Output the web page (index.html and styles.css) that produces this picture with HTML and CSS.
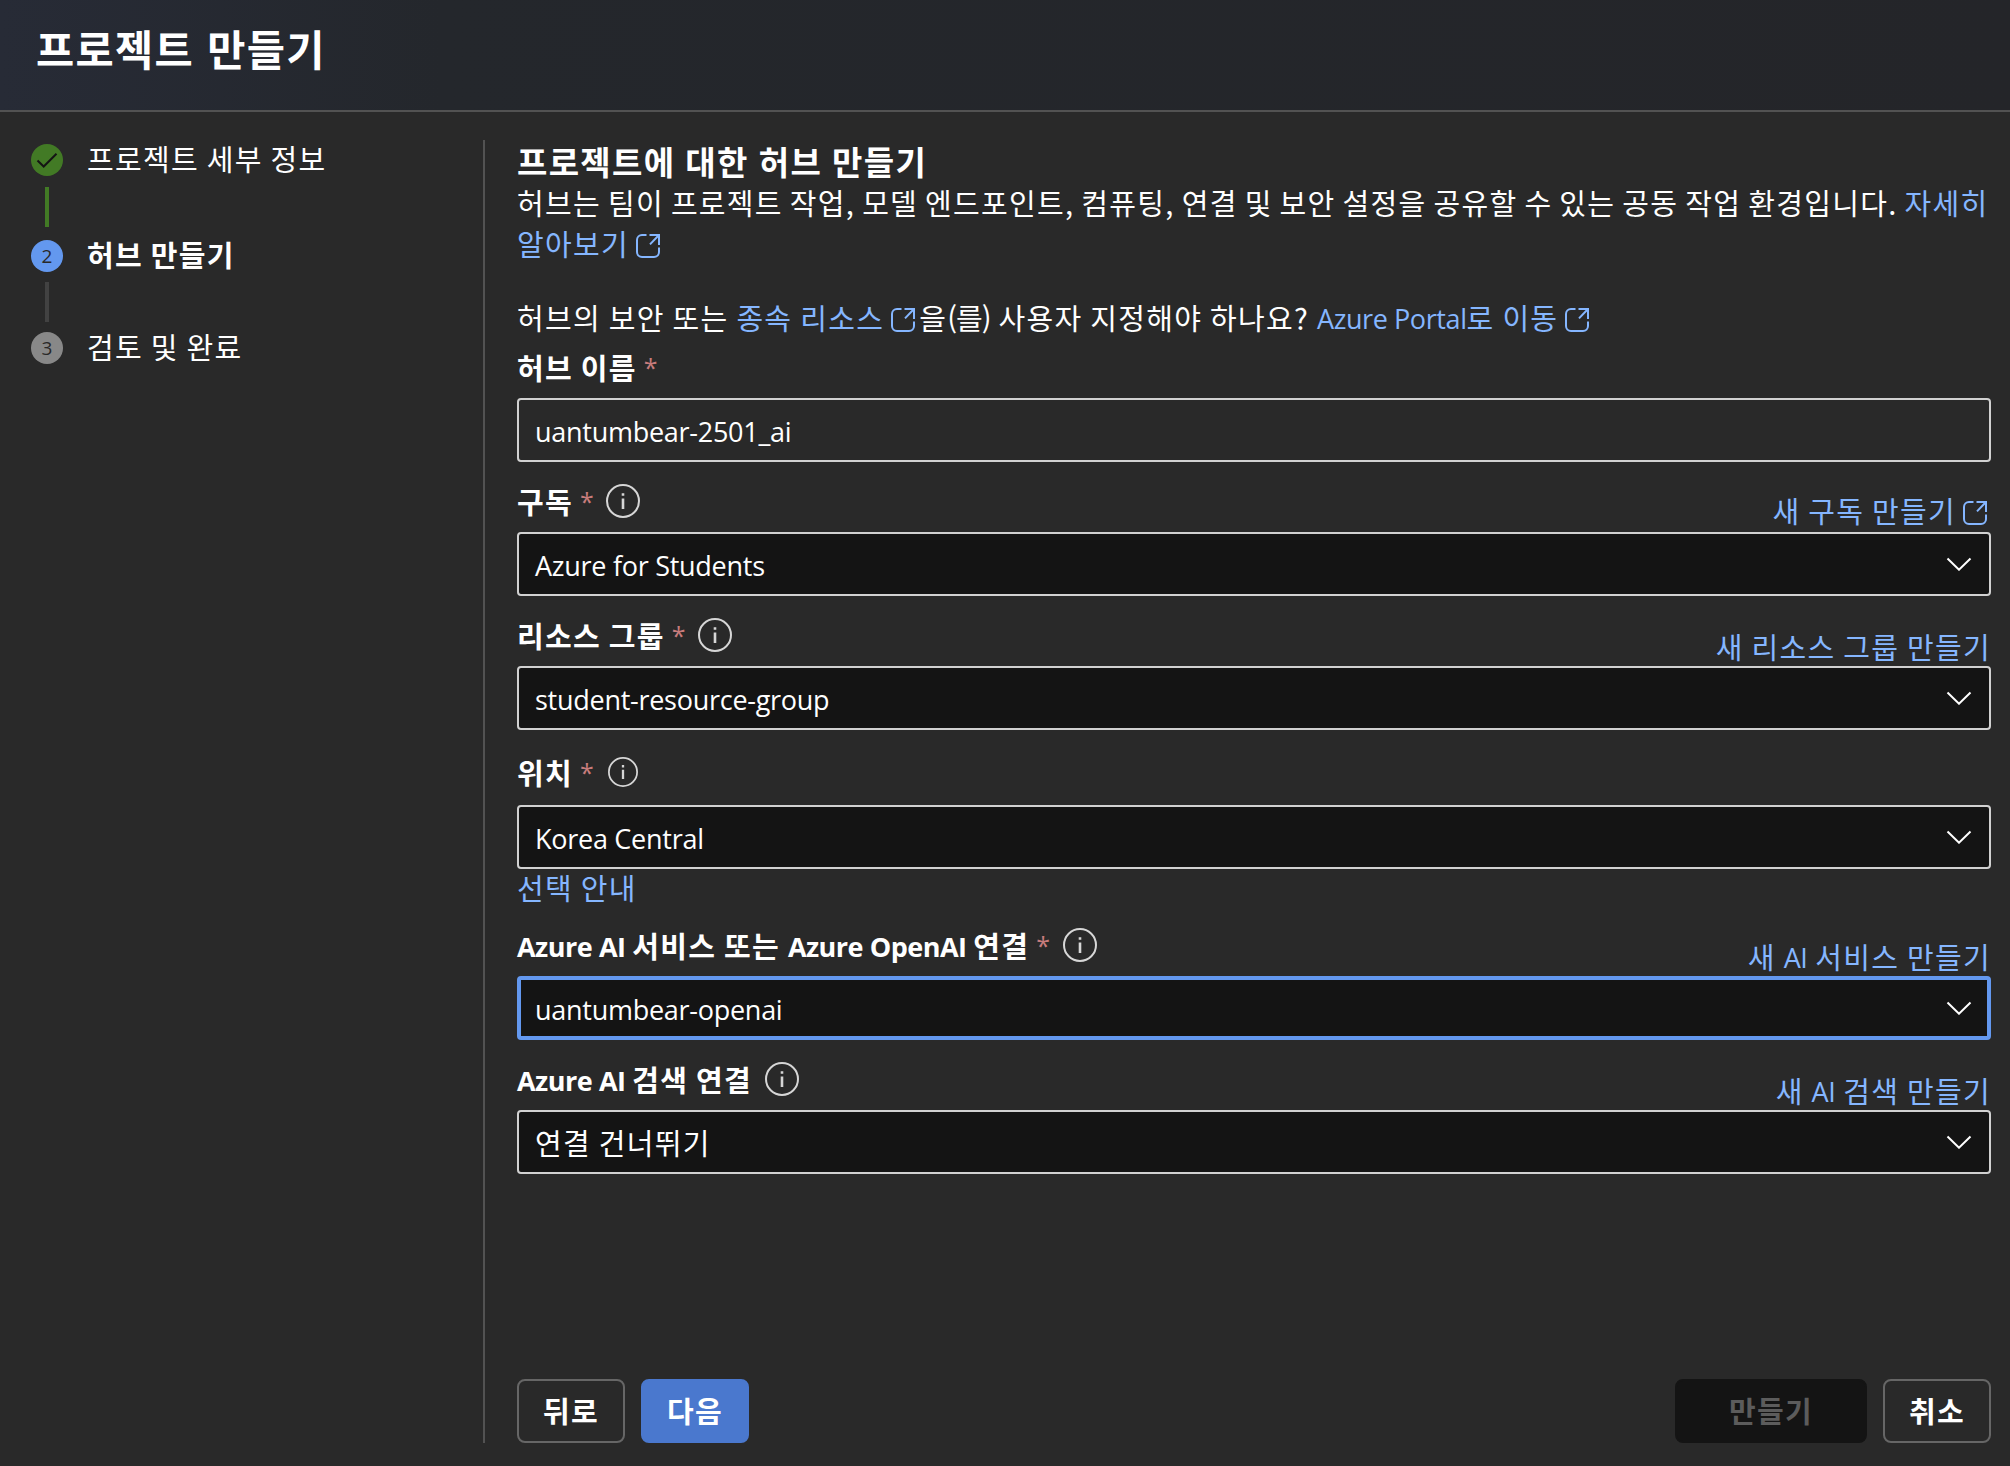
FILE: index.html
```html
<!DOCTYPE html>
<html lang="ko">
<head>
<meta charset="utf-8">
<title>프로젝트 만들기</title>
<link rel="stylesheet" href="styles.css">
</head>
<body>
<svg class="sprite" aria-hidden="true">
  <symbol id="open" viewBox="0 0 24 24"><path d="M10.5 1H6a5 5 0 0 0-5 5v12a5 5 0 0 0 5 5h12a5 5 0 0 0 5-5v-4.5M13.5 1H23v10M23 1l-9 9.4"/></symbol>
  <symbol id="info" viewBox="0 0 34 34"><circle cx="17" cy="17" r="16"/><path stroke-width="2.6" d="M17 14.5v10.500M17 9.200v2.600"/></symbol>
  <symbol id="chevron" viewBox="0 0 26 14"><path d="M1.5 1.5 13 12.7 24.500 1.500"/></symbol>
</svg>
<header class="header"><h1 class="title">프로젝트 만들기</h1></header>
<div class="body">
  <nav class="steps">
    <div class="step"><span class="dot dot-done"><svg viewBox="0 0 32 32"><path d="M6.500 16.500 12.700 22.500 25.500 9.700"/></svg></span><span class="step-text">프로젝트 세부 정보</span></div>
    <div class="bar bar-done"></div>
    <div class="step"><span class="dot dot-active">2</span><span class="step-text step-current">허브 만들기</span></div>
    <div class="bar bar-next"></div>
    <div class="step"><span class="dot dot-next">3</span><span class="step-text">검토 및 완료</span></div>
  </nav>
  <main class="main">
    <h2 class="heading">프로젝트에 대한 허브 만들기</h2>
    <p class="text text-intro">허브는 팀이 프로젝트 작업, 모델 엔드포인트, 컴퓨팅, 연결 및 보안 설정을 공유할 수 있는 공동 작업 환경입니다. <a class="link">자세히<br>알아보기<svg class="open"><use href="#open"/></svg></a></p>
    <p class="text text-gap">허브의 보안 또는 <a class="link">종속 리소스<svg class="open"><use href="#open"/></svg></a>을<span class="tight">(를)</span> 사용자 지정해야 하나요? <a class="link"><span class="latin">Azure Portal</span>로 이동<svg class="open"><use href="#open"/></svg></a></p>

    <div class="head head-first"><label class="label">허브 이름<span class="star">*</span></label></div>
    <div class="box input"><span class="latin">uantumbear-2501_ai</span></div>

    <div class="head"><label class="label">구독<span class="star">*</span><svg class="info"><use href="#info"/></svg></label><a class="link new new-open">새 구독 만들기<svg class="open"><use href="#open"/></svg></a></div>
    <div class="box"><span class="latin">Azure for Students</span><svg class="chevron"><use href="#chevron"/></svg></div>

    <div class="head"><label class="label">리소스 그룹<span class="star">*</span><svg class="info"><use href="#info"/></svg></label><a class="link new">새 리소스 그룹 만들기</a></div>
    <div class="box"><span class="latin">student-resource-group</span><svg class="chevron"><use href="#chevron"/></svg></div>

    <div class="head head-location"><label class="label">위치<span class="star">*</span><svg class="info info-small"><use href="#info"/></svg></label></div>
    <div class="box"><span class="latin">Korea Central</span><svg class="chevron"><use href="#chevron"/></svg></div>
    <a class="link help">선택 안내</a>

    <div class="head"><label class="label"><span class="mixed"><span class="latin">Azure AI </span>서비스 또는 <span class="latin">Azure OpenAI </span>연결</span><span class="star">*</span><svg class="info"><use href="#info"/></svg></label><a class="link new">새 <span class="latin">AI</span> 서비스 만들기</a></div>
    <div class="box box-focus"><span class="latin">uantumbear-openai</span><svg class="chevron"><use href="#chevron"/></svg></div>

    <div class="head"><label class="label"><span class="mixed"><span class="latin">Azure AI </span>검색 연결</span><svg class="info"><use href="#info"/></svg></label><a class="link new">새 <span class="latin">AI</span> 검색 만들기</a></div>
    <div class="box"><span>연결 건너뛰기</span><svg class="chevron"><use href="#chevron"/></svg></div>

    <footer class="footer">
      <button class="btn">뒤로</button>
      <button class="btn btn-primary">다음</button>
      <button class="btn btn-disabled" disabled>만들기</button>
      <button class="btn">취소</button>
    </footer>
  </main>
</div>
</body>
</html>
```
FILE: styles.css
```css
* { box-sizing: border-box; }
body {
  margin: 0;
  height: 1466px;
  display: flex;
  flex-direction: column;
  background: #292929;
  color: #fff;
  font-family: "Noto Sans CJK KR", sans-serif;
  font-size: 29px;
  letter-spacing: 0.045em;
  word-spacing: -1.6px;
  overflow: hidden;
}
.sprite { display: none; }
svg { fill: none; stroke: currentColor; stroke-width: 2; flex: none; }

.header {
  height: 112px;
  flex: none;
  padding-left: 36px;
  border-bottom: 2px solid #525252;
  background: linear-gradient(90deg, #272b36 0%, #24272c 22%, #242529 100%);
}
.title { margin: 0; font-size: 41.5px; line-height: 96px; font-weight: 700; word-spacing: 0.5px; }

.body { flex: 1; display: flex; padding: 28px 19px 23px 31px; }

.steps { width: 454px; flex: none; border-right: 2px solid #525252; padding-top: 4px; }
.step { display: flex; align-items: center; height: 32px; }
.step-text { margin: -4px 0 0 24px; line-height: 32px; }
.step-current { font-weight: 700; }
.dot {
  width: 32px; height: 32px; border-radius: 50%;
  display: flex; align-items: center; justify-content: center;
  color: #292929; font: 19px "Open Sans", sans-serif; letter-spacing: 0;
}
.dot-done { background: #427a25; color: #141414; }
.dot-active { background: #6398ef; }
.dot-next { background: #888; }
.bar { width: 4px; height: 40px; margin-left: 14px; }
.bar-done { background: #427a25; margin-top: 11px; margin-bottom: 13px; }
.bar-next { background: #424242; margin-top: 10px; margin-bottom: 10px; }

.main { flex: 1; min-width: 0; padding-left: 32px; display: flex; flex-direction: column; }
.heading { margin: 0; font-size: 33px; line-height: 42px; word-spacing: -0.5px; }
.text { margin: 0; height: 41px; line-height: 41px; white-space: nowrap; word-spacing: -1.6px; }
.text-intro { height: 82px; word-spacing: -2.45px; }
.text-gap { margin-top: 33px; }
.link { color: #85b6ff; }
.tight { letter-spacing: -0.9px; }
.latin { font-family: "Open Sans", sans-serif; font-size: 27px; line-height: 1; letter-spacing: -0.01em; word-spacing: 0; white-space: pre; }
.link .latin { position: relative; top: -1px; letter-spacing: -0.015em; }
.open { width: 24px; height: 24px; margin-left: 7px; margin-right: 4px; vertical-align: -1.5px; }

.head { height: 70px; display: flex; justify-content: space-between; align-items: flex-end; }
.head-first { height: 60px; }
.head-location { height: 75px; }
.head-location .label { margin-bottom: 2px; }
.label { display: flex; align-items: center; height: 62px; line-height: 61px; font-weight: 700; white-space: pre; }
.label .latin { letter-spacing: -0.02em; word-spacing: 0.4px; position: relative; top: -1px; }
.star { margin-left: 7px; color: #c87c7c; font: 25px/60px "Open Sans", sans-serif; letter-spacing: 0; }
.info { width: 34px; height: 34px; margin-left: 12.5px; color: #d6d6d6; }
.info-small { width: 30px; height: 30px; margin-left: 14.5px; }
.new { line-height: 36px; padding-bottom: 2px; }
.new-open { padding-bottom: 4px; }
.new-open .open { margin-right: 4px; margin-left: 7px; }
.help { line-height: 36px; height: 37px; }

.box {
  height: 64px; flex: none;
  display: flex; align-items: center; justify-content: space-between;
  padding: 0 17px 0 16px;
  background: #141414;
  border: 2px solid #d1d1d1;
  border-radius: 4px;
  line-height: 40px;
}
.box .latin { padding-top: 3px; }
.input { background: #292929; }
.box-focus { border: 4px solid #6398ef; padding: 0 15px 0 14px; }
.chevron { width: 26px; height: 14px; margin-top: -1px; }

.footer { margin-top: auto; display: flex; gap: 16px; }
.btn {
  width: 108px; height: 64px; padding: 0 0 2px;
  background: transparent; color: #fff;
  border: 2px solid #666; border-radius: 8px;
  font: inherit; font-weight: 700; letter-spacing: inherit;
}
.btn-primary { background: #4a78ce; border-color: #4a78ce; }
.btn-disabled { width: 192px; margin-left: auto; background: #141414; border-color: #141414; color: #5c5c5c; }
```
